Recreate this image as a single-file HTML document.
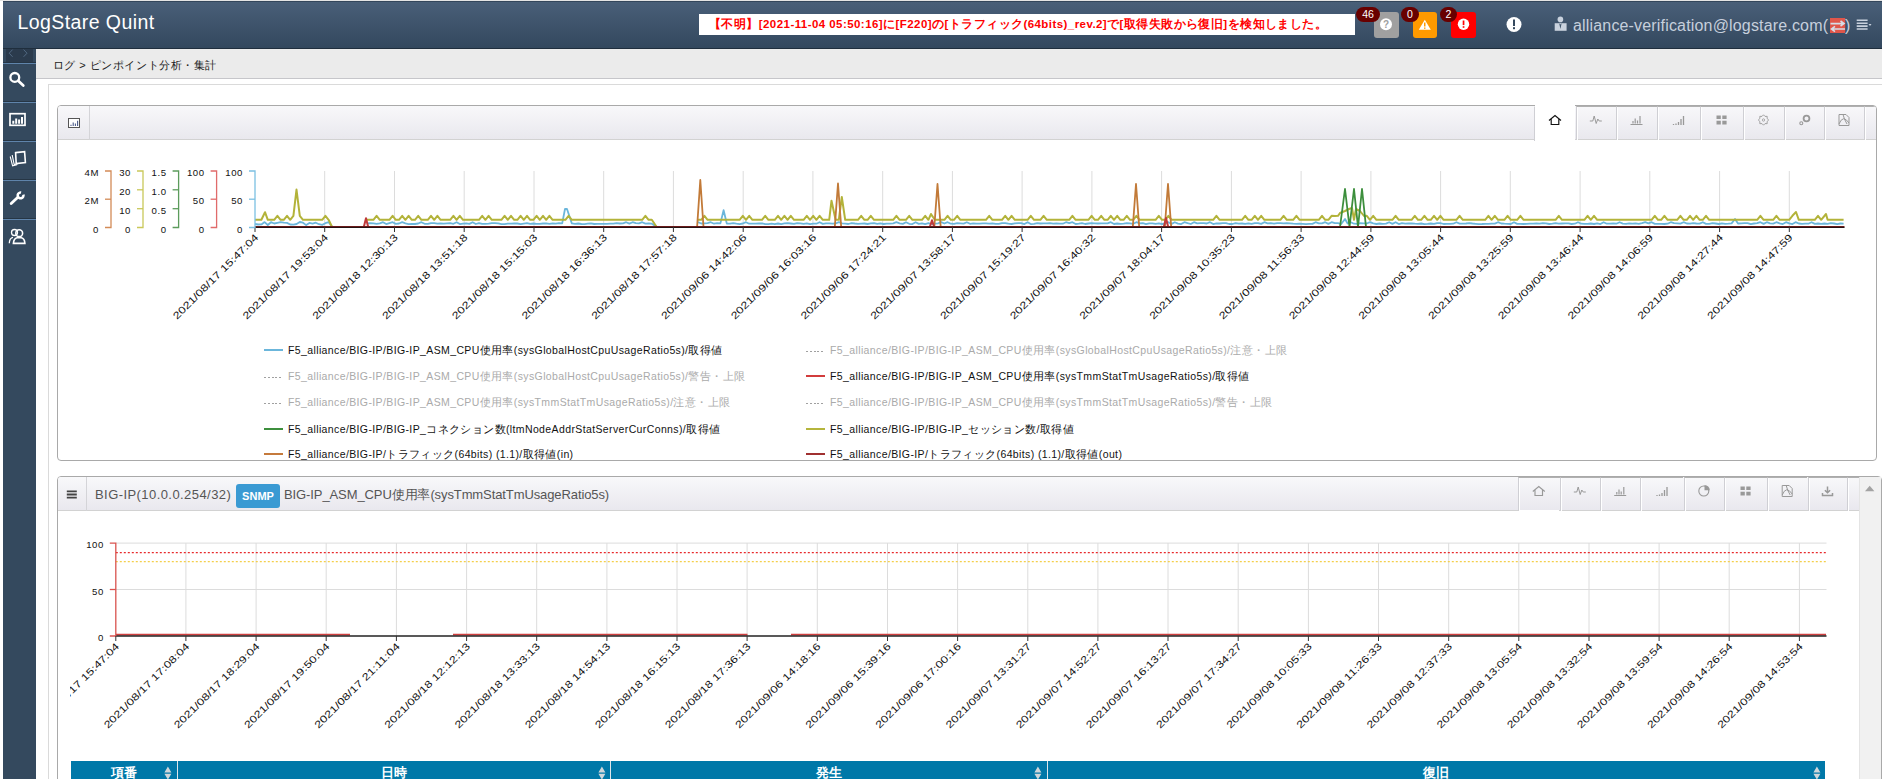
<!DOCTYPE html>
<html><head><meta charset="utf-8">
<style>
*{box-sizing:border-box;margin:0;padding:0}
html,body{width:1882px;height:779px;overflow:hidden;background:#fff;font-family:"Liberation Sans",sans-serif;position:relative}
.abs{position:absolute}
#topline{position:absolute;left:0;top:0;width:1882px;height:1px;background:#e4e4e4}
#hdr{position:absolute;left:3px;top:1px;width:1879px;height:48px;background:linear-gradient(#495f78,#33485e);border-top:1px solid #33465b;border-bottom:1px solid #1f2e3d}
#logo{position:absolute;left:14.5px;top:9px;font-size:19.5px;color:#fff;letter-spacing:0.42px}
#alert{position:absolute;left:699px;top:14px;width:656px;height:21px;background:#fff;color:#f00;font-size:11.5px;font-weight:bold;line-height:21px;padding-left:10px;white-space:nowrap;overflow:hidden;letter-spacing:0.44px}
.sq{position:absolute;top:12px;width:25px;height:26px;border-radius:3px}
.bdg{position:absolute;top:7px;height:15px;border-radius:8px;background:#680000;color:#fff;font-size:10.5px;line-height:15px;text-align:center}
#user{position:absolute;left:1573px;top:17px;font-size:16px;color:#c6cfdc;white-space:nowrap;letter-spacing:0.17px;line-height:18px}
#user2{position:absolute;left:1845px;top:17px;font-size:16px;color:#c6cfdc;line-height:18px}
#side{position:absolute;left:3px;top:49px;width:33px;height:730px;background:#34495e}
.sep{position:absolute;left:0;width:33px;height:2px;border-top:1px solid #263645;background:#5f84ab;}
#bc{position:absolute;left:36px;top:49px;width:1846px;height:30px;background:#ebebeb;border-bottom:1px solid #c6c6ca}
#bctext{position:absolute;left:16.5px;top:8.5px;font-size:11px;color:#222;letter-spacing:0.55px}
#outer{position:absolute;left:48px;top:84px;width:1900px;height:800px;border:1px solid #dadada}
.panel{position:absolute;border:1px solid #a9a9a9;border-radius:4px 4px 0 0;background:#fff;overflow:hidden}
.ph{position:absolute;left:0;top:0;height:34px;background:linear-gradient(#f8f8fa,#e9e8ee);border-bottom:1px solid #d2d2d2}
.tab{position:absolute;top:0;height:34px;border-left:1px solid #cfcfd4;box-shadow:inset 1px 0 0 #fff;border-top:1px solid #b0b0b0}
.tab svg{position:absolute;left:0;top:0}
.lg-l{position:absolute;width:19px;height:2px}
.lg-t{position:absolute;font-size:10.5px;white-space:nowrap;line-height:14px;letter-spacing:0.38px}
svg text{font-family:"Liberation Sans",sans-serif}
#thead{position:absolute;left:71px;top:761px;width:1754px;height:30px;background:#0078a8;color:#fff;font-size:13px}
.th{position:absolute;top:0;height:30px;text-align:center;line-height:24px;font-weight:bold}
#scroll{position:absolute;left:1859px;top:477px;width:22px;height:310px;background:#f1f1f1;border-left:1px solid #e4e4e4}
#p2title{position:absolute;left:95px;top:486px;font-size:13px;color:#555;white-space:nowrap;line-height:18px;letter-spacing:0.43px}
#snmp{position:absolute;left:236px;top:484px;width:44px;height:24px;border-radius:3px;background:#3a9ad3;color:#fff;font-weight:bold;font-size:11px;line-height:24px;text-align:center}
#p2title2{position:absolute;left:284px;top:486px;font-size:13px;color:#555;white-space:nowrap;line-height:18px;letter-spacing:-0.1px}
.j{display:inline-block;white-space:nowrap;overflow:visible}
</style></head><body>
<div id="topline"></div>
<div id="hdr">
  <div id="logo">LogStare Quint</div>
</div>
<div id="alert"><span class="j" style="width:49.77px">【不明】</span>[2021-11-04 05:50:16]<span class="j" style="width:12.45px">に</span>[F220]<span class="j" style="width:12.45px">の</span>[<span class="j" style="width:74.64px">トラフィック</span>(64bits)_rev.2]<span class="j" style="width:12.45px">で</span>[<span class="j" style="width:99.53px">取得失敗から復旧</span>]<span class="j" style="width:99.53px">を検知しました。</span></div>
<div class="sq" style="left:1374px;background:#a0a0a0"></div>
<div class="sq" style="left:1413px;width:24px;background:#ff9a00"></div>
<div class="sq" style="left:1451px;background:#ff0000"></div>
<svg class="abs" style="left:0;top:0" width="1882" height="49">
  <circle cx="1386" cy="24.2" r="6" fill="#fff"/>
  <text x="1386" y="28.2" text-anchor="middle" font-size="10" font-weight="bold" fill="#a0a0a0">?</text>
  <path d="M1424.8,19.8 L1430.8,29.8 L1418.8,29.8 Z" fill="#fff"/>
  <rect x="1424" y="22.5" width="1.5" height="4" fill="#ff9a00"/><rect x="1424" y="27.5" width="1.5" height="1.3" fill="#ff9a00"/>
  <circle cx="1463.5" cy="24.2" r="5.7" fill="#fff"/>
  <rect x="1462.7" y="20.5" width="1.7" height="4.6" fill="#f00"/><rect x="1462.7" y="26.2" width="1.7" height="1.6" fill="#f00"/>
  <circle cx="1514" cy="24.5" r="7.5" fill="#fff"/>
  <rect x="1513" y="19.5" width="2" height="6.5" fill="#34485d"/><rect x="1513" y="27.2" width="2" height="2" fill="#34485d"/>
  <circle cx="1560.4" cy="19.4" r="2.8" fill="#c9d2de"/>
  <path d="M1554.7,23.2 H1566.6 V30.8 H1554.7 Z" fill="#c9d2de"/>
  <path d="M1559.2,23.2 L1560.4,29 L1561.6,23.2 L1560.4,24.6 Z" fill="#3d5369"/>
  <rect x="1830" y="18" width="15.2" height="15" fill="#e0564a"/>
  <path d="M1830.5,23.6 H1843 M1840.5,21 L1844,23.6 L1840.5,26.2" stroke="#d6dce6" stroke-width="1.6" fill="none"/>
  <path d="M1845,29 H1832.5 M1835,26.4 L1831.5,29 L1835,31.6" stroke="#d6dce6" stroke-width="1.6" fill="none"/>
  <path d="M1856.7,20.3 H1867.6 M1856.7,23.2 H1867.6 M1856.7,26.1 H1867.6 M1856.7,29 H1867.6" stroke="#c9d2de" stroke-width="1.6"/>
  <path d="M1868.5,24 L1871.5,24 L1870,26 Z" fill="#c9d2de"/>
</svg>
<div class="bdg" style="left:1356px;width:24px">46</div>
<div class="bdg" style="left:1401px;width:18px">0</div>
<div class="bdg" style="left:1440px;width:17px">2</div>
<div id="user">alliance-verification@logstare.com(</div><div id="user2">)</div>
<div id="side">
  <div class="abs" style="left:3px;top:0;width:27px;height:13px;background:#2b3b4d"></div>
  <svg class="abs" style="left:0;top:0" width="33" height="220">
    <path d="M9.6,0.6 L6.2,4.2 L9.6,7.8 M20.6,0.6 L24,4.2 L20.6,7.8" stroke="#566e89" stroke-width="0.9" fill="none"/>
    <circle cx="11.8" cy="28.4" r="4.4" stroke="#fff" stroke-width="2.3" fill="none"/>
    <path d="M15.2,31.8 L20.3,36.6" stroke="#fff" stroke-width="2.7" stroke-linecap="round"/>
    <rect x="7" y="64.7" width="15" height="11.6" stroke="#fff" stroke-width="1.7" fill="none"/>
    <path d="M10.3,74.7 V71.8 M13.2,74.7 V69.5 M16.1,74.7 V70.6 M19,74.7 V68" stroke="#fff" stroke-width="2"/>
    <path d="M7.2,107.5 L9.6,116.8 L14,115.8" stroke="#fff" stroke-width="1.1" fill="none"/>
    <path d="M9.2,106 L11.2,115.5 L15,114.8" stroke="#fff" stroke-width="1.1" fill="none"/>
    <path d="M12.6,103.6 L21.6,102.6 L22.4,113.6 L13.2,114.6 Z" stroke="#fff" stroke-width="1.6" fill="none"/>
    <path d="M8.2,154.6 L14.6,148.4" stroke="#fff" stroke-width="2.8" stroke-linecap="round"/>
    <circle cx="17.6" cy="146.4" r="2.9" stroke="#fff" stroke-width="2.5" fill="none" stroke-dasharray="14.6,3.6" transform="rotate(-15 17.6 146.4)"/>
    <circle cx="11.5" cy="183.5" r="3" stroke="#fff" stroke-width="1.3" fill="none"/>
    <path d="M6.3,194.3 Q6.5,188.8 10,188.3" stroke="#fff" stroke-width="1.3" fill="none"/>
    <circle cx="16.2" cy="184.2" r="3.4" stroke="#fff" stroke-width="1.6" fill="none"/>
    <path d="M10.4,194.4 Q10.8,189.4 14,188.8 H18.4 Q21.6,189.4 21.9,194.4 Z" stroke="#fff" stroke-width="1.6" fill="none"/>
  </svg>
  <div class="sep" style="top:13px"></div>
  <div class="sep" style="top:52px"></div>
  <div class="sep" style="top:91px"></div>
  <div class="sep" style="top:130px"></div>
  <div class="sep" style="top:169px"></div>
</div>
<div id="bc"><div id="bctext"><span class="j" style="width:23.11px">ログ</span> &gt; <span class="j" style="width:127.06px">ピンポイント分析・集計</span></div></div>
<div id="outer"></div>
<div class="panel" style="left:57px;top:105px;width:1820px;height:356px;border-radius:4px">
  <div class="ph" style="width:1820px">
    <div class="abs" style="left:31px;top:0;width:1px;height:34px;background:#d4d4d8"></div>
    <svg class="abs" style="left:0;top:0" width="31" height="34">
      <rect x="10.5" y="12.5" width="11" height="9" stroke="#555" stroke-width="1" fill="#fff"/>
      <path d="M13,20 V18.8 M15.2,20 V16.5 M17.4,20 V17.5 M19.6,20 V14.8" stroke="#4a5a8a" stroke-width="1.1"/>
    </svg>
    <div class="tab" style="left:1476px;width:41px;background:#fff;border-top-color:#fff;height:35px"></div>
<div class="tab" style="left:1518px;width:40px;"></div>
<div class="tab" style="left:1558px;width:41px;"></div>
<div class="tab" style="left:1599px;width:43px;"></div>
<div class="tab" style="left:1642px;width:43px;"></div>
<div class="tab" style="left:1685px;width:41px;"></div>
<div class="tab" style="left:1726px;width:40px;"></div>
<div class="tab" style="left:1766px;width:40px;"></div><div class="tab" style="left:1806px;width:20px;border-left:1px solid #cfcfd4"></div>
  </div>
</div>
<div class="panel" style="left:57px;top:476px;width:1825px;height:320px">
  <div class="ph" style="width:1802px">
    <div class="abs" style="left:28px;top:0;width:1px;height:34px;background:#d4d4d8"></div>
    <svg class="abs" style="left:0;top:0" width="29" height="34">
      <path d="M8.8,14.3 H18.8 M8.8,17.5 H18.8 M8.8,20.7 H18.8" stroke="#444" stroke-width="1.8"/>
    </svg>
    <div class="tab" style="left:1460px;width:42px;"></div>
<div class="tab" style="left:1502px;width:40px;"></div>
<div class="tab" style="left:1542px;width:40px;"></div>
<div class="tab" style="left:1582px;width:43px;"></div>
<div class="tab" style="left:1626px;width:40px;"></div>
<div class="tab" style="left:1666px;width:43px;"></div>
<div class="tab" style="left:1709px;width:40px;"></div>
<div class="tab" style="left:1750px;width:40px;"></div><div class="tab" style="left:1789px;width:20px"></div>
  </div>
</div>
<div class="abs" style="left:1535px;top:105px;width:40px;height:1px;background:#fff"></div>
<div class="abs" style="left:1519px;top:510px;width:40px;height:1px;background:#fff"></div>
<div id="scroll"><svg class="abs" style="left:0;top:0" width="22" height="30"><path d="M5,14.2 L9.7,8.7 L14.4,14.2 Z" fill="#a3a3a3"/></svg></div>
<div id="p2title">BIG-IP(10.0.0.254/32)</div>
<div id="snmp">SNMP</div>
<div id="p2title2">BIG-IP_ASM_CPU<span class="j" style="width:38.70px">使用率</span>(sysTmmStatTmUsageRatio5s)</div>
<svg class="abs" style="left:0;top:0" width="1882" height="779">
<line x1="324.7" y1="171.0" x2="324.7" y2="227.5" stroke="#dcdcdc" stroke-width="1"/>
<line x1="394.5" y1="171.0" x2="394.5" y2="227.5" stroke="#dcdcdc" stroke-width="1"/>
<line x1="464.2" y1="171.0" x2="464.2" y2="227.5" stroke="#dcdcdc" stroke-width="1"/>
<line x1="534.0" y1="171.0" x2="534.0" y2="227.5" stroke="#dcdcdc" stroke-width="1"/>
<line x1="603.7" y1="171.0" x2="603.7" y2="227.5" stroke="#dcdcdc" stroke-width="1"/>
<line x1="673.4" y1="171.0" x2="673.4" y2="227.5" stroke="#dcdcdc" stroke-width="1"/>
<line x1="743.2" y1="171.0" x2="743.2" y2="227.5" stroke="#dcdcdc" stroke-width="1"/>
<line x1="812.9" y1="171.0" x2="812.9" y2="227.5" stroke="#dcdcdc" stroke-width="1"/>
<line x1="882.7" y1="171.0" x2="882.7" y2="227.5" stroke="#dcdcdc" stroke-width="1"/>
<line x1="952.4" y1="171.0" x2="952.4" y2="227.5" stroke="#dcdcdc" stroke-width="1"/>
<line x1="1022.1" y1="171.0" x2="1022.1" y2="227.5" stroke="#dcdcdc" stroke-width="1"/>
<line x1="1091.9" y1="171.0" x2="1091.9" y2="227.5" stroke="#dcdcdc" stroke-width="1"/>
<line x1="1161.6" y1="171.0" x2="1161.6" y2="227.5" stroke="#dcdcdc" stroke-width="1"/>
<line x1="1231.4" y1="171.0" x2="1231.4" y2="227.5" stroke="#dcdcdc" stroke-width="1"/>
<line x1="1301.1" y1="171.0" x2="1301.1" y2="227.5" stroke="#dcdcdc" stroke-width="1"/>
<line x1="1370.9" y1="171.0" x2="1370.9" y2="227.5" stroke="#dcdcdc" stroke-width="1"/>
<line x1="1440.6" y1="171.0" x2="1440.6" y2="227.5" stroke="#dcdcdc" stroke-width="1"/>
<line x1="1510.3" y1="171.0" x2="1510.3" y2="227.5" stroke="#dcdcdc" stroke-width="1"/>
<line x1="1580.1" y1="171.0" x2="1580.1" y2="227.5" stroke="#dcdcdc" stroke-width="1"/>
<line x1="1649.8" y1="171.0" x2="1649.8" y2="227.5" stroke="#dcdcdc" stroke-width="1"/>
<line x1="1719.6" y1="171.0" x2="1719.6" y2="227.5" stroke="#dcdcdc" stroke-width="1"/>
<line x1="1789.3" y1="171.0" x2="1789.3" y2="227.5" stroke="#dcdcdc" stroke-width="1"/>
<path d="M255.0,224.0 L258.2,224.5 L261.4,224.4 L264.6,222.1 L267.8,225.0 L271.0,222.2 L274.2,223.5 L277.4,222.8 L280.6,222.2 L283.8,222.7 L287.0,222.9 L290.2,224.5 L293.4,224.6 L296.6,224.0 L299.8,222.0 L303.0,222.7 L306.2,225.1 L309.4,222.9 L312.6,223.7 L315.8,222.7 L319.0,224.2 L322.2,224.9 L325.4,223.2 L328.6,222.2 L332.0,226.8 M367.0,223.4 L370.2,223.1 L373.4,223.4 L376.6,223.9 L379.8,223.4 L383.0,222.2 L386.2,224.1 L389.4,223.1 L392.6,222.2 L395.8,223.9 L399.0,223.5 L402.2,222.2 L405.4,223.3 L408.6,224.1 L411.8,223.9 L415.0,224.0 L418.2,223.5 L421.4,222.2 L424.6,223.8 L427.8,223.9 L431.0,223.1 L434.2,223.2 L437.4,223.7 L440.6,223.4 L443.8,223.6 L447.0,223.4 L450.2,223.2 L453.4,223.8 L456.6,222.2 L459.8,224.1 L463.0,223.6 L466.2,223.3 L469.4,223.9 L472.6,222.2 L475.8,224.0 L479.0,223.1 L482.2,223.9 L485.4,223.8 L488.6,223.7 L491.8,223.2 L495.0,223.2 L498.2,223.4 L501.4,224.1 L504.6,224.1 L507.8,223.6 L511.0,223.6 L514.2,223.5 L517.4,223.5 L520.6,224.1 L523.8,223.6 L527.0,223.2 L530.2,223.9 L533.4,223.5 L536.6,223.9 L539.8,223.8 L543.0,223.5 L546.2,223.4 L549.4,223.9 L552.6,223.4 L555.8,223.7 L559.0,223.1 L562.2,223.4 L565.0,209.0 L567.0,209.0 L571.8,223.4 L575.0,223.8 L578.2,223.5 L581.4,224.0 L584.6,224.1 L587.8,223.6 L591.0,223.3 L594.2,224.0 L597.4,223.8 L600.6,223.8 L603.8,223.9 L607.0,223.8 L610.2,223.7 L613.4,223.7 L616.6,223.1 L619.8,223.5 L623.0,223.3 L626.2,222.2 L629.4,223.6 L632.6,222.2 L635.8,223.2 L639.0,223.4 L642.2,222.2 L645.4,223.6 L648.6,223.5 L651.8,223.7 L656.5,226.8 M698.0,222.2 L701.2,223.5 L704.4,223.4 L707.6,223.2 L710.8,222.2 L714.0,223.7 L717.2,223.2 L720.4,223.4 L723.6,210.2 L726.8,223.5 L730.0,223.7 L733.2,223.2 L736.4,223.7 L739.6,224.1 L742.8,223.5 L746.0,222.2 L749.2,223.7 L752.4,223.7 L755.6,223.7 L758.8,223.5 L762.0,223.3 L765.2,224.1 L768.4,224.1 L771.6,223.7 L774.8,224.1 L778.0,223.5 L781.2,224.1 L784.4,223.4 L787.6,223.2 L790.8,223.5 L794.0,223.9 L797.2,223.1 L800.4,223.4 L803.6,223.9 L806.8,223.4 L810.0,224.1 L813.2,223.7 L816.4,223.7 L819.6,222.2 L822.8,223.9 L826.0,223.4 L829.2,223.4 L832.4,223.6 L835.6,223.5 L838.8,222.2 L842.0,223.4 L845.2,223.6 L848.4,224.0 L851.6,223.1 L854.8,223.5 L858.0,223.8 L861.2,223.6 L864.4,223.5 L867.6,224.0 L870.8,223.4 L874.0,223.2 L877.2,223.8 L880.4,223.4 L883.6,224.0 L886.8,223.6 L890.0,223.6 L893.2,223.3 L896.4,222.2 L899.6,223.3 L902.8,223.9 L906.0,222.2 L909.2,223.8 L912.4,224.1 L915.6,222.2 L918.8,223.9 L922.0,223.3 L925.2,224.1 L928.4,223.2 L931.6,224.0 L934.8,223.7 L938.0,223.3 L941.2,222.2 L944.4,223.5 L947.6,222.2 L950.8,223.7 L954.0,223.8 L957.2,223.2 L960.4,223.4 L963.6,223.6 L966.8,222.2 L970.0,223.8 L973.2,223.3 L976.4,223.6 L979.6,223.7 L982.8,223.4 L986.0,223.4 L989.2,223.6 L992.4,223.3 L995.6,223.8 L998.8,223.8 L1002.0,223.2 L1005.2,223.2 L1008.4,223.7 L1011.6,224.0 L1014.8,223.4 L1018.0,223.1 L1021.2,223.2 L1024.4,224.1 L1027.6,222.2 L1030.8,224.1 L1034.0,223.8 L1037.2,223.2 L1040.4,223.5 L1043.6,223.4 L1046.8,223.4 L1050.0,223.2 L1053.2,223.7 L1056.4,223.5 L1059.6,223.6 L1062.8,223.7 L1066.0,222.2 L1069.2,223.1 L1072.4,222.2 L1075.6,224.0 L1078.8,223.6 L1082.0,223.1 L1085.2,224.0 L1088.4,223.5 L1091.6,223.2 L1094.8,223.3 L1098.0,223.5 L1101.2,223.3 L1104.4,223.4 L1107.6,223.4 L1110.8,222.2 L1114.0,224.0 L1117.2,223.5 L1120.4,223.8 L1123.6,223.6 L1126.8,223.2 L1130.0,223.4 L1133.2,223.8 L1136.4,222.2 L1139.6,223.3 L1142.8,223.2 L1146.0,224.1 L1149.2,223.4 L1152.4,223.4 L1155.6,223.8 L1158.8,223.3 L1162.0,224.0 L1165.2,223.5 L1168.4,222.2 L1171.6,223.9 L1174.8,222.2 L1178.0,223.6 L1181.2,224.1 L1184.4,222.2 L1187.6,223.2 L1190.8,224.0 L1194.0,222.2 L1197.2,223.3 L1200.4,223.2 L1203.6,223.2 L1206.8,223.5 L1210.0,222.2 L1213.2,224.1 L1216.4,223.3 L1219.6,223.5 L1222.8,223.2 L1226.0,223.2 L1229.2,224.0 L1232.4,224.0 L1235.6,223.1 L1238.8,223.6 L1242.0,223.5 L1245.2,223.8 L1248.4,223.4 L1251.6,223.9 L1254.8,223.2 L1258.0,223.2 L1261.2,223.9 L1264.4,222.2 L1267.6,223.3 L1270.8,223.2 L1274.0,223.7 L1277.2,223.2 L1280.4,223.1 L1283.6,223.4 L1286.8,223.2 L1290.0,223.4 L1293.2,223.7 L1296.4,223.8 L1299.6,223.7 L1302.8,223.9 L1306.0,224.1 L1309.2,223.8 L1312.4,223.9 L1315.6,222.2 L1318.8,223.3 L1322.0,223.4 L1325.2,222.2 L1328.4,223.9 L1331.6,222.2 L1334.8,223.2 L1338.0,223.2 L1341.2,224.0 L1345.0,219.0 L1347.6,223.5 L1350.8,222.2 L1354.0,223.7 L1357.2,223.9 L1360.4,223.2 L1363.6,223.3 L1366.8,223.5 L1370.0,222.2 L1373.2,223.4 L1376.4,224.0 L1379.6,223.5 L1382.8,223.9 L1386.0,223.6 L1389.2,222.2 L1392.4,223.9 L1395.6,222.2 L1398.8,224.1 L1402.0,223.1 L1405.2,223.6 L1408.4,223.5 L1411.6,223.4 L1414.8,223.7 L1418.0,223.9 L1421.2,223.5 L1424.4,224.1 L1427.6,223.9 L1430.8,223.5 L1434.0,223.9 L1437.2,223.1 L1440.4,223.2 L1443.6,224.0 L1446.8,223.9 L1450.0,223.8 L1453.2,223.7 L1456.4,222.2 L1459.6,223.6 L1462.8,223.7 L1466.0,223.5 L1469.2,223.1 L1472.4,223.5 L1475.6,223.8 L1478.8,224.1 L1482.0,224.0 L1485.2,223.8 L1488.4,223.9 L1491.6,223.7 L1494.8,223.6 L1498.0,222.2 L1501.2,223.5 L1504.4,223.7 L1507.6,223.8 L1510.8,224.0 L1514.0,222.2 L1517.2,223.9 L1520.4,223.8 L1523.6,224.0 L1526.8,223.9 L1530.0,223.7 L1533.2,223.6 L1536.4,223.3 L1539.6,223.6 L1542.8,223.1 L1546.0,223.3 L1549.2,224.0 L1552.4,223.7 L1555.6,223.2 L1558.8,223.7 L1562.0,223.5 L1565.2,223.3 L1568.4,223.4 L1571.6,224.0 L1574.8,223.7 L1578.0,222.2 L1581.2,223.7 L1584.4,223.9 L1587.6,223.8 L1590.8,223.5 L1594.0,224.0 L1597.2,223.4 L1600.4,224.1 L1603.6,222.2 L1606.8,223.7 L1610.0,223.7 L1613.2,223.3 L1616.4,223.7 L1619.6,222.2 L1622.8,223.6 L1626.0,223.9 L1629.2,223.4 L1632.4,223.7 L1635.6,223.3 L1638.8,223.9 L1642.0,223.2 L1645.2,222.2 L1648.4,223.3 L1651.6,222.2 L1654.8,223.9 L1658.0,223.8 L1661.2,223.9 L1664.4,224.0 L1667.6,223.7 L1670.8,222.2 L1674.0,223.2 L1677.2,223.3 L1680.4,223.6 L1683.6,222.2 L1686.8,223.5 L1690.0,223.6 L1693.2,223.2 L1696.4,223.5 L1699.6,223.6 L1702.8,222.2 L1706.0,223.9 L1709.2,223.8 L1712.4,223.2 L1715.6,223.5 L1718.8,224.0 L1722.0,223.4 L1725.2,223.8 L1728.4,223.7 L1731.6,223.4 L1735.0,219.0 L1738.0,223.5 L1741.2,223.3 L1744.4,223.2 L1747.6,223.2 L1750.8,224.1 L1754.0,223.5 L1757.2,223.2 L1760.4,222.2 L1763.6,223.9 L1766.8,222.2 L1770.0,223.4 L1773.2,223.6 L1776.4,222.2 L1779.6,223.3 L1782.8,224.1 L1786.0,222.2 L1789.2,223.4 L1792.4,224.1 L1795.6,222.2 L1798.8,223.5 L1802.0,223.9 L1805.2,223.7 L1808.4,223.7 L1811.6,222.2 L1814.8,223.9 L1818.0,223.5 L1821.2,223.9 L1824.4,223.5 L1827.6,223.9 L1830.8,223.2 L1834.0,223.5 L1837.2,224.1 L1840.4,223.5 L1843.6,223.6 " fill="none" stroke="#6bb6db" stroke-width="1.8" stroke-linejoin="round"/>
<path d="M255.0,219.8 L258.2,219.8 L261.4,219.8 L265.0,212.2 L267.8,219.8 L271.0,219.8 L274.2,219.8 L277.4,215.8 L280.6,219.8 L283.8,219.8 L287.0,215.8 L290.2,219.8 L293.4,215.8 L296.5,189.6 L299.8,215.8 L303.0,219.8 L306.2,219.8 L309.4,219.8 L312.6,219.8 L315.8,219.8 L319.0,219.8 L322.2,219.8 L325.4,215.8 L328.6,219.8 L332.0,226.8 M367.0,219.8 L370.2,219.8 L373.4,219.8 L376.6,215.8 L379.8,219.8 L383.0,219.8 L386.2,219.8 L389.4,219.8 L392.6,215.8 L395.8,219.8 L399.0,219.8 L402.2,215.8 L405.4,219.8 L408.6,215.8 L411.8,219.8 L415.0,219.8 L418.2,215.8 L421.4,219.8 L424.6,219.8 L427.8,219.8 L431.0,215.8 L434.2,219.8 L437.4,215.8 L440.6,219.8 L443.8,219.8 L447.0,219.8 L450.2,219.8 L453.4,215.8 L456.6,219.8 L459.8,215.8 L463.0,219.8 L466.2,219.8 L469.4,219.8 L472.6,219.8 L475.8,219.8 L479.0,219.8 L482.2,215.8 L485.4,219.8 L488.6,215.8 L491.8,219.8 L495.0,219.8 L498.2,219.8 L501.4,219.8 L504.6,215.8 L507.8,219.8 L511.0,215.8 L514.2,219.8 L517.4,219.8 L520.6,215.8 L523.8,219.8 L527.0,215.8 L530.2,219.8 L533.4,219.8 L536.6,215.8 L539.8,219.8 L543.0,215.8 L546.2,219.8 L549.4,215.8 L552.6,219.8 L555.8,219.8 L559.0,219.8 L562.2,219.8 L565.4,219.8 L568.6,215.8 L571.8,219.8 L575.0,219.8 L578.2,219.8 L581.4,219.8 L584.6,219.8 L587.8,219.8 L591.0,219.8 L594.2,219.8 L597.4,219.8 L600.6,219.8 L603.8,219.8 L607.0,219.8 L610.2,219.8 L613.4,219.8 L616.6,219.8 L619.8,219.8 L623.0,219.8 L626.2,219.8 L629.4,219.8 L632.6,219.8 L635.8,219.8 L639.0,219.8 L642.2,219.8 L645.4,215.8 L648.6,219.8 L651.8,219.8 L656.5,226.8 M698.0,219.8 L701.2,219.8 L704.4,215.8 L707.6,219.8 L710.8,219.8 L714.0,219.8 L717.2,219.8 L720.4,219.8 L723.6,219.8 L726.8,219.8 L730.0,219.8 L733.2,219.8 L736.4,219.8 L739.6,219.8 L742.8,215.8 L746.0,219.8 L749.2,215.8 L752.4,219.8 L755.6,219.8 L758.8,219.8 L762.0,219.8 L765.2,215.8 L768.4,219.8 L771.6,219.8 L774.8,219.8 L778.0,215.8 L781.2,219.8 L784.4,215.8 L787.6,219.8 L790.8,215.8 L794.0,219.8 L797.2,219.8 L800.4,219.8 L803.6,219.8 L806.8,215.8 L810.0,219.8 L813.2,215.8 L816.4,219.8 L819.6,215.8 L822.8,219.8 L826.0,219.8 L829.2,219.8 L831.5,200.7 L835.6,219.8 L838.8,219.8 L841.8,197.0 L845.2,219.8 L848.4,219.8 L851.6,219.8 L854.8,219.8 L858.0,219.8 L861.2,215.8 L864.4,219.8 L867.6,219.8 L870.8,215.8 L874.0,219.8 L877.2,219.8 L880.4,219.8 L883.6,219.8 L886.8,219.8 L890.0,219.8 L893.2,219.8 L896.4,215.8 L899.6,219.8 L902.8,219.8 L906.0,219.8 L909.2,215.8 L912.4,219.8 L915.6,219.8 L918.8,219.8 L922.0,219.8 L925.2,215.8 L928.4,219.8 L931.0,214.0 L934.8,219.8 L938.0,219.8 L941.2,219.8 L944.4,219.8 L947.6,215.8 L950.8,219.8 L954.0,219.8 L957.2,215.8 L960.4,219.8 L963.6,219.8 L966.8,219.8 L970.0,219.8 L973.2,219.8 L976.4,219.8 L979.6,219.8 L982.8,219.8 L986.0,219.8 L989.2,215.8 L992.4,219.8 L995.6,219.8 L998.8,219.8 L1002.0,219.8 L1005.2,215.8 L1008.4,219.8 L1011.6,215.8 L1014.8,219.8 L1018.0,219.8 L1021.2,219.8 L1024.4,219.8 L1027.6,219.8 L1030.8,215.8 L1034.0,219.8 L1037.2,219.8 L1040.4,219.8 L1043.6,215.8 L1046.8,219.8 L1050.0,219.8 L1053.2,219.8 L1056.4,219.8 L1059.6,219.8 L1062.8,219.8 L1066.0,219.8 L1069.2,219.8 L1072.4,215.8 L1075.6,219.8 L1078.8,219.8 L1082.0,219.8 L1085.2,219.8 L1088.4,219.8 L1091.6,215.8 L1094.8,219.8 L1098.0,219.8 L1101.2,215.8 L1104.4,219.8 L1107.6,219.8 L1110.8,215.8 L1114.0,219.8 L1117.2,215.8 L1120.4,219.8 L1123.6,219.8 L1126.8,215.8 L1130.0,219.8 L1133.2,219.8 L1136.4,215.8 L1139.6,219.8 L1142.8,219.8 L1146.0,219.8 L1149.2,219.8 L1152.4,219.8 L1155.6,219.8 L1158.8,215.8 L1162.0,219.8 L1165.2,219.8 L1168.4,215.8 L1171.6,219.8 L1174.8,219.8 L1178.0,219.8 L1181.2,219.8 L1184.4,219.8 L1187.6,219.8 L1190.8,219.8 L1194.0,219.8 L1197.2,219.8 L1200.4,219.8 L1203.6,219.8 L1206.8,219.8 L1210.0,219.8 L1213.2,219.8 L1216.4,215.8 L1219.6,219.8 L1222.8,219.8 L1226.0,219.8 L1229.2,219.8 L1232.4,219.8 L1235.6,219.8 L1238.8,219.8 L1242.0,219.8 L1245.2,215.8 L1248.4,219.8 L1251.6,219.8 L1254.8,215.8 L1258.0,219.8 L1261.2,215.8 L1264.4,219.8 L1267.6,219.8 L1270.8,219.8 L1274.0,219.8 L1277.2,219.8 L1280.4,219.8 L1283.6,215.8 L1286.8,219.8 L1290.0,219.8 L1293.2,219.8 L1296.4,215.8 L1299.6,219.8 L1302.8,219.8 L1306.0,219.8 L1309.2,219.8 L1312.4,219.8 L1315.6,219.8 L1318.8,219.8 L1322.0,215.8 L1325.2,219.8 L1328.4,219.8 L1331.6,215.8 L1335.0,216.0 L1338.0,215.8 L1340.0,213.0 L1345.0,211.0 L1349.0,209.0 L1352.0,208.0 L1354.0,219.8 L1356.0,209.0 L1360.0,211.0 L1364.0,216.0 L1366.8,215.8 L1370.0,219.8 L1373.2,215.8 L1376.4,219.8 L1379.6,219.8 L1382.8,219.8 L1386.0,219.8 L1389.2,219.8 L1392.4,219.8 L1395.6,215.8 L1398.8,219.8 L1402.0,219.8 L1405.2,219.8 L1408.4,219.8 L1411.6,219.8 L1414.8,215.8 L1418.0,219.8 L1421.2,219.8 L1424.4,215.8 L1427.6,219.8 L1430.8,219.8 L1434.0,215.8 L1437.2,219.8 L1440.4,215.8 L1443.6,219.8 L1446.8,219.8 L1450.0,219.8 L1453.2,219.8 L1456.4,219.8 L1459.6,215.8 L1462.8,219.8 L1466.0,219.8 L1469.2,219.8 L1472.4,219.8 L1475.6,219.8 L1478.8,219.8 L1482.0,219.8 L1485.2,219.8 L1488.4,215.8 L1491.6,219.8 L1494.8,215.8 L1498.0,219.8 L1501.2,219.8 L1504.4,219.8 L1507.6,215.8 L1510.8,219.8 L1514.0,219.8 L1517.2,219.8 L1520.4,215.8 L1523.6,219.8 L1526.8,219.8 L1530.0,219.8 L1533.2,219.8 L1536.4,219.8 L1539.6,219.8 L1542.8,219.8 L1546.0,219.8 L1549.2,219.8 L1552.4,219.8 L1555.6,219.8 L1558.8,215.8 L1562.0,219.8 L1565.2,219.8 L1568.4,219.8 L1571.6,219.8 L1574.8,219.8 L1578.0,219.8 L1581.2,219.8 L1584.4,219.8 L1587.6,215.8 L1590.8,219.8 L1594.0,215.8 L1597.2,219.8 L1600.4,219.8 L1603.6,219.8 L1606.8,219.8 L1610.0,219.8 L1613.2,219.8 L1616.4,219.8 L1619.6,219.8 L1622.8,219.8 L1626.0,219.8 L1629.2,219.8 L1632.4,219.8 L1635.6,219.8 L1638.8,219.8 L1642.0,219.8 L1645.2,219.8 L1648.4,219.8 L1651.6,219.8 L1654.8,215.8 L1658.0,219.8 L1661.2,219.8 L1664.4,215.8 L1667.6,219.8 L1670.8,219.8 L1674.0,219.8 L1677.2,219.8 L1680.4,215.8 L1683.6,219.8 L1686.8,219.8 L1690.0,215.8 L1693.2,219.8 L1696.4,215.8 L1699.6,219.8 L1702.8,219.8 L1706.0,215.8 L1709.2,219.8 L1712.4,219.8 L1715.6,219.8 L1718.8,219.8 L1722.0,219.8 L1725.2,219.8 L1728.4,219.8 L1731.6,219.8 L1734.8,219.8 L1738.0,219.8 L1741.2,219.8 L1744.4,219.8 L1747.6,219.8 L1750.8,219.8 L1754.0,219.8 L1757.2,219.8 L1760.4,215.8 L1763.6,219.8 L1766.8,219.8 L1770.0,219.8 L1773.2,219.8 L1776.4,215.8 L1779.6,219.8 L1782.8,219.8 L1786.0,219.8 L1789.2,219.8 L1792.4,215.8 L1796.0,212.0 L1798.8,219.8 L1802.0,219.8 L1805.2,219.8 L1808.4,219.8 L1811.6,219.8 L1814.8,219.8 L1818.0,215.8 L1821.2,219.8 L1826.0,214.0 L1827.6,219.8 L1830.8,219.8 L1834.0,219.8 L1837.2,219.8 L1840.4,219.8 L1843.6,219.8 " fill="none" stroke="#b3b33a" stroke-width="2" stroke-linejoin="round"/>
<path d="M1330,227 L1340,227 L1345,189 L1349.5,227 L1354,189 L1358,227 L1362,189 L1366,227 L1844,227" fill="none" stroke="#3d8f3d" stroke-width="1.8" stroke-linejoin="round"/>
<path d="M697.1,227 L700.3,180.0 L703.5,227" fill="none" stroke="#c27a38" stroke-width="1.8" stroke-linejoin="round"/>
<path d="M834.8,227 L838.0,183.5 L841.2,227" fill="none" stroke="#c27a38" stroke-width="1.8" stroke-linejoin="round"/>
<path d="M934.3,227 L937.5,184.0 L940.7,227" fill="none" stroke="#c27a38" stroke-width="1.8" stroke-linejoin="round"/>
<path d="M1132.8,227 L1136.0,184.0 L1139.2,227" fill="none" stroke="#c27a38" stroke-width="1.8" stroke-linejoin="round"/>
<path d="M1164.8,227 L1168.0,184.0 L1171.2,227" fill="none" stroke="#c27a38" stroke-width="1.8" stroke-linejoin="round"/>
<path d="M363.8,227 L366.0,218.2 L368.2,227" fill="none" stroke="#c03a3a" stroke-width="2" stroke-linejoin="round"/>
<path d="M929.8,227 L932.0,220.2 L934.2,227" fill="none" stroke="#c03a3a" stroke-width="2" stroke-linejoin="round"/>
<path d="M1163.8,227 L1166.0,218.0 L1168.2,227" fill="none" stroke="#c03a3a" stroke-width="2" stroke-linejoin="round"/>
<line x1="255" y1="227.5" x2="1844.5" y2="227.5" stroke="#111" stroke-width="1"/>
<line x1="255" y1="226.6" x2="1844.5" y2="226.6" stroke="#6a1a1a" stroke-width="1.4"/>
<line x1="255.0" y1="227" x2="255.0" y2="232" stroke="#333" stroke-width="1"/>
<line x1="324.7" y1="227" x2="324.7" y2="232" stroke="#333" stroke-width="1"/>
<line x1="394.5" y1="227" x2="394.5" y2="232" stroke="#333" stroke-width="1"/>
<line x1="464.2" y1="227" x2="464.2" y2="232" stroke="#333" stroke-width="1"/>
<line x1="534.0" y1="227" x2="534.0" y2="232" stroke="#333" stroke-width="1"/>
<line x1="603.7" y1="227" x2="603.7" y2="232" stroke="#333" stroke-width="1"/>
<line x1="673.4" y1="227" x2="673.4" y2="232" stroke="#333" stroke-width="1"/>
<line x1="743.2" y1="227" x2="743.2" y2="232" stroke="#333" stroke-width="1"/>
<line x1="812.9" y1="227" x2="812.9" y2="232" stroke="#333" stroke-width="1"/>
<line x1="882.7" y1="227" x2="882.7" y2="232" stroke="#333" stroke-width="1"/>
<line x1="952.4" y1="227" x2="952.4" y2="232" stroke="#333" stroke-width="1"/>
<line x1="1022.1" y1="227" x2="1022.1" y2="232" stroke="#333" stroke-width="1"/>
<line x1="1091.9" y1="227" x2="1091.9" y2="232" stroke="#333" stroke-width="1"/>
<line x1="1161.6" y1="227" x2="1161.6" y2="232" stroke="#333" stroke-width="1"/>
<line x1="1231.4" y1="227" x2="1231.4" y2="232" stroke="#333" stroke-width="1"/>
<line x1="1301.1" y1="227" x2="1301.1" y2="232" stroke="#333" stroke-width="1"/>
<line x1="1370.9" y1="227" x2="1370.9" y2="232" stroke="#333" stroke-width="1"/>
<line x1="1440.6" y1="227" x2="1440.6" y2="232" stroke="#333" stroke-width="1"/>
<line x1="1510.3" y1="227" x2="1510.3" y2="232" stroke="#333" stroke-width="1"/>
<line x1="1580.1" y1="227" x2="1580.1" y2="232" stroke="#333" stroke-width="1"/>
<line x1="1649.8" y1="227" x2="1649.8" y2="232" stroke="#333" stroke-width="1"/>
<line x1="1719.6" y1="227" x2="1719.6" y2="232" stroke="#333" stroke-width="1"/>
<line x1="1789.3" y1="227" x2="1789.3" y2="232" stroke="#333" stroke-width="1"/>
<text transform="translate(259.0,238) rotate(-45)" text-anchor="end" font-size="9.9" textLength="116" lengthAdjust="spacingAndGlyphs" fill="#111">2021/08/17 15:47:04</text>
<text transform="translate(328.7,238) rotate(-45)" text-anchor="end" font-size="9.9" textLength="116" lengthAdjust="spacingAndGlyphs" fill="#111">2021/08/17 19:53:04</text>
<text transform="translate(398.5,238) rotate(-45)" text-anchor="end" font-size="9.9" textLength="116" lengthAdjust="spacingAndGlyphs" fill="#111">2021/08/18 12:30:13</text>
<text transform="translate(468.2,238) rotate(-45)" text-anchor="end" font-size="9.9" textLength="116" lengthAdjust="spacingAndGlyphs" fill="#111">2021/08/18 13:51:18</text>
<text transform="translate(538.0,238) rotate(-45)" text-anchor="end" font-size="9.9" textLength="116" lengthAdjust="spacingAndGlyphs" fill="#111">2021/08/18 15:15:03</text>
<text transform="translate(607.7,238) rotate(-45)" text-anchor="end" font-size="9.9" textLength="116" lengthAdjust="spacingAndGlyphs" fill="#111">2021/08/18 16:36:13</text>
<text transform="translate(677.4,238) rotate(-45)" text-anchor="end" font-size="9.9" textLength="116" lengthAdjust="spacingAndGlyphs" fill="#111">2021/08/18 17:57:18</text>
<text transform="translate(747.2,238) rotate(-45)" text-anchor="end" font-size="9.9" textLength="116" lengthAdjust="spacingAndGlyphs" fill="#111">2021/09/06 14:42:06</text>
<text transform="translate(816.9,238) rotate(-45)" text-anchor="end" font-size="9.9" textLength="116" lengthAdjust="spacingAndGlyphs" fill="#111">2021/09/06 16:03:16</text>
<text transform="translate(886.7,238) rotate(-45)" text-anchor="end" font-size="9.9" textLength="116" lengthAdjust="spacingAndGlyphs" fill="#111">2021/09/06 17:24:21</text>
<text transform="translate(956.4,238) rotate(-45)" text-anchor="end" font-size="9.9" textLength="116" lengthAdjust="spacingAndGlyphs" fill="#111">2021/09/07 13:58:17</text>
<text transform="translate(1026.2,238) rotate(-45)" text-anchor="end" font-size="9.9" textLength="116" lengthAdjust="spacingAndGlyphs" fill="#111">2021/09/07 15:19:27</text>
<text transform="translate(1095.9,238) rotate(-45)" text-anchor="end" font-size="9.9" textLength="116" lengthAdjust="spacingAndGlyphs" fill="#111">2021/09/07 16:40:32</text>
<text transform="translate(1165.6,238) rotate(-45)" text-anchor="end" font-size="9.9" textLength="116" lengthAdjust="spacingAndGlyphs" fill="#111">2021/09/07 18:04:17</text>
<text transform="translate(1235.4,238) rotate(-45)" text-anchor="end" font-size="9.9" textLength="116" lengthAdjust="spacingAndGlyphs" fill="#111">2021/09/08 10:35:23</text>
<text transform="translate(1305.1,238) rotate(-45)" text-anchor="end" font-size="9.9" textLength="116" lengthAdjust="spacingAndGlyphs" fill="#111">2021/09/08 11:56:33</text>
<text transform="translate(1374.9,238) rotate(-45)" text-anchor="end" font-size="9.9" textLength="116" lengthAdjust="spacingAndGlyphs" fill="#111">2021/09/08 12:44:59</text>
<text transform="translate(1444.6,238) rotate(-45)" text-anchor="end" font-size="9.9" textLength="116" lengthAdjust="spacingAndGlyphs" fill="#111">2021/09/08 13:05:44</text>
<text transform="translate(1514.3,238) rotate(-45)" text-anchor="end" font-size="9.9" textLength="116" lengthAdjust="spacingAndGlyphs" fill="#111">2021/09/08 13:25:59</text>
<text transform="translate(1584.1,238) rotate(-45)" text-anchor="end" font-size="9.9" textLength="116" lengthAdjust="spacingAndGlyphs" fill="#111">2021/09/08 13:46:44</text>
<text transform="translate(1653.8,238) rotate(-45)" text-anchor="end" font-size="9.9" textLength="116" lengthAdjust="spacingAndGlyphs" fill="#111">2021/09/08 14:06:59</text>
<text transform="translate(1723.6,238) rotate(-45)" text-anchor="end" font-size="9.9" textLength="116" lengthAdjust="spacingAndGlyphs" fill="#111">2021/09/08 14:27:44</text>
<text transform="translate(1793.3,238) rotate(-45)" text-anchor="end" font-size="9.9" textLength="116" lengthAdjust="spacingAndGlyphs" fill="#111">2021/09/08 14:47:59</text>
<path d="M105.0,171.0 H111.0 V227.5 H105.0" fill="none" stroke="#d38b57" stroke-width="1.3"/>
<text x="99.0" y="176.2" text-anchor="end" font-size="9.6" letter-spacing="0.55" fill="#111">4M</text>
<line x1="105.0" y1="199.2" x2="111.0" y2="199.2" stroke="#d38b57" stroke-width="1.3"/>
<text x="99.0" y="204.4" text-anchor="end" font-size="9.6" letter-spacing="0.55" fill="#111">2M</text>
<text x="99.0" y="232.7" text-anchor="end" font-size="9.6" letter-spacing="0.55" fill="#111">0</text>
<path d="M137.0,171.0 H143.0 V227.5 H137.0" fill="none" stroke="#c9c85a" stroke-width="1.3"/>
<text x="131.0" y="176.2" text-anchor="end" font-size="9.6" letter-spacing="0.55" fill="#111">30</text>
<line x1="137.0" y1="189.8" x2="143.0" y2="189.8" stroke="#c9c85a" stroke-width="1.3"/>
<text x="131.0" y="195.0" text-anchor="end" font-size="9.6" letter-spacing="0.55" fill="#111">20</text>
<line x1="137.0" y1="208.7" x2="143.0" y2="208.7" stroke="#c9c85a" stroke-width="1.3"/>
<text x="131.0" y="213.9" text-anchor="end" font-size="9.6" letter-spacing="0.55" fill="#111">10</text>
<text x="131.0" y="232.7" text-anchor="end" font-size="9.6" letter-spacing="0.55" fill="#111">0</text>
<path d="M172.6,171.0 H178.6 V227.5 H172.6" fill="none" stroke="#5c9c5c" stroke-width="1.3"/>
<text x="166.6" y="176.2" text-anchor="end" font-size="9.6" letter-spacing="0.55" fill="#111">1.5</text>
<line x1="172.6" y1="189.8" x2="178.6" y2="189.8" stroke="#5c9c5c" stroke-width="1.3"/>
<text x="166.6" y="195.0" text-anchor="end" font-size="9.6" letter-spacing="0.55" fill="#111">1.0</text>
<line x1="172.6" y1="208.7" x2="178.6" y2="208.7" stroke="#5c9c5c" stroke-width="1.3"/>
<text x="166.6" y="213.9" text-anchor="end" font-size="9.6" letter-spacing="0.55" fill="#111">0.5</text>
<text x="166.6" y="232.7" text-anchor="end" font-size="9.6" letter-spacing="0.55" fill="#111">0</text>
<path d="M210.6,171.0 H216.6 V227.5 H210.6" fill="none" stroke="#e06b6b" stroke-width="1.3"/>
<text x="204.6" y="176.2" text-anchor="end" font-size="9.6" letter-spacing="0.55" fill="#111">100</text>
<line x1="210.6" y1="199.2" x2="216.6" y2="199.2" stroke="#e06b6b" stroke-width="1.3"/>
<text x="204.6" y="204.4" text-anchor="end" font-size="9.6" letter-spacing="0.55" fill="#111">50</text>
<text x="204.6" y="232.7" text-anchor="end" font-size="9.6" letter-spacing="0.55" fill="#111">0</text>
<path d="M249.0,171.0 H255.0 V227.5 H249.0" fill="none" stroke="#7cc0e2" stroke-width="1.3"/>
<text x="243.0" y="176.2" text-anchor="end" font-size="9.6" letter-spacing="0.55" fill="#111">100</text>
<line x1="249.0" y1="199.2" x2="255.0" y2="199.2" stroke="#7cc0e2" stroke-width="1.3"/>
<text x="243.0" y="204.4" text-anchor="end" font-size="9.6" letter-spacing="0.55" fill="#111">50</text>
<text x="243.0" y="232.7" text-anchor="end" font-size="9.6" letter-spacing="0.55" fill="#111">0</text><path d="M1549.0,120.5 L1555.0,115.5 L1561.0,120.5 M1551.2,119.0 V124.5 H1558.8 V119.0" stroke="#111" stroke-width="1.15" fill="none"/>
<path d="M1589.8,121.0 H1592.8 L1594.2,116.0 L1596.2,123.5 L1597.8,119.0 L1599.2,121.0 H1601.8" stroke="#999" stroke-width="1" fill="none"/>
<path d="M1630.5,124.5 H1642.5 M1633.0,123.5 V121.0 M1635.2,123.5 V118.5 M1637.5,123.5 V120.5 M1640.0,123.5 V116.0" stroke="#999" stroke-width="1.2" fill="none"/>
<path d="M1673.5,125.0 V124.0 M1676.0,125.0 V123.5 M1678.5,125.0 V122.0 M1681.0,125.0 V119.0 M1683.5,125.0 V116.0" stroke="#999" stroke-width="1.3" fill="none"/>
<path d="M1716.5,115.5 h4.3 v3.6 h-4.3 Z M1722.3,115.5 h4.3 v3.6 h-4.3 Z M1716.5,120.8 h4.3 v3.6 h-4.3 Z M1722.3,120.8 h4.3 v3.6 h-4.3 Z" fill="#999"/>
<polygon points="1763.50,114.80 1764.99,116.40 1767.18,116.32 1767.10,118.51 1768.70,120.00 1767.10,121.49 1767.18,123.68 1764.99,123.60 1763.50,125.20 1762.01,123.60 1759.82,123.68 1759.90,121.49 1758.30,120.00 1759.90,118.51 1759.82,116.32 1762.01,116.40" stroke="#999" stroke-width="0.9" fill="none" stroke-linejoin="round"/><circle cx="1763.5" cy="120.0" r="1.2" stroke="#999" stroke-width="0.8" fill="none"/>
<circle cx="1806.5" cy="118.5" r="2.9" stroke="#999" stroke-width="1.8" fill="none"/><circle cx="1801.3" cy="123.3" r="1.5" stroke="#999" stroke-width="1.1" fill="none"/>
<path d="M1839.0,114.5 H1846.0 L1849.0,117.5 V125.5 H1839.0 Z M1839.0,124.0 Q1843.0,114.0 1849.0,123.0 M1843.0,114.5 Q1844.0,119.0 1847.0,124.0" stroke="#999" stroke-width="1" fill="none"/><path d="M1532.8,491.5 L1538.8,486.5 L1544.8,491.5 M1535.0,490.0 V495.5 H1542.5 V490.0" stroke="#999" stroke-width="1.15" fill="none"/>
<path d="M1573.8,492.0 H1576.8 L1578.2,487.0 L1580.2,494.5 L1581.8,490.0 L1583.2,492.0 H1585.8" stroke="#999" stroke-width="1" fill="none"/>
<path d="M1614.2,495.5 H1626.2 M1616.8,494.5 V492.0 M1619.0,494.5 V489.5 M1621.2,494.5 V491.5 M1623.8,494.5 V487.0" stroke="#999" stroke-width="1.2" fill="none"/>
<path d="M1657.0,496.0 V495.0 M1659.5,496.0 V494.5 M1662.0,496.0 V493.0 M1664.5,496.0 V490.0 M1667.0,496.0 V487.0" stroke="#999" stroke-width="1.3" fill="none"/>
<circle cx="1703.8" cy="491.0" r="5" stroke="#999" stroke-width="1.1" fill="none"/><path d="M1704.5,490.3 V485.0 A5.3,5.3 0 0 1 1709.8,490.3 Z" fill="#999"/>
<path d="M1740.5,486.5 h4.3 v3.6 h-4.3 Z M1746.3,486.5 h4.3 v3.6 h-4.3 Z M1740.5,491.8 h4.3 v3.6 h-4.3 Z M1746.3,491.8 h4.3 v3.6 h-4.3 Z" fill="#999"/>
<path d="M1782.2,485.5 H1789.2 L1792.2,488.5 V496.5 H1782.2 Z M1782.2,495.0 Q1786.2,485.0 1792.2,494.0 M1786.2,485.5 Q1787.2,490.0 1790.2,495.0" stroke="#999" stroke-width="1" fill="none"/>
<path d="M1827.5,486.5 V492.5 M1824.9,490.2 L1827.5,492.8 L1830.1,490.2 M1822.5,493.0 V495.5 H1832.5 V493.0" stroke="#999" stroke-width="1.5" fill="none"/>
</svg>
<svg class="abs" style="left:70px;top:510px" width="1789" height="269">
<g transform="translate(-70,-510)">
<line x1="115.8" y1="543.1" x2="1826.5" y2="543.1" stroke="#dcdcdc"/>
<line x1="115.8" y1="589.5" x2="1826.5" y2="589.5" stroke="#dcdcdc"/>
<line x1="185.9" y1="543.1" x2="185.9" y2="636.0" stroke="#dcdcdc"/>
<line x1="256.1" y1="543.1" x2="256.1" y2="636.0" stroke="#dcdcdc"/>
<line x1="326.2" y1="543.1" x2="326.2" y2="636.0" stroke="#dcdcdc"/>
<line x1="396.4" y1="543.1" x2="396.4" y2="636.0" stroke="#dcdcdc"/>
<line x1="466.6" y1="543.1" x2="466.6" y2="636.0" stroke="#dcdcdc"/>
<line x1="536.7" y1="543.1" x2="536.7" y2="636.0" stroke="#dcdcdc"/>
<line x1="606.9" y1="543.1" x2="606.9" y2="636.0" stroke="#dcdcdc"/>
<line x1="677.0" y1="543.1" x2="677.0" y2="636.0" stroke="#dcdcdc"/>
<line x1="747.1" y1="543.1" x2="747.1" y2="636.0" stroke="#dcdcdc"/>
<line x1="817.3" y1="543.1" x2="817.3" y2="636.0" stroke="#dcdcdc"/>
<line x1="887.5" y1="543.1" x2="887.5" y2="636.0" stroke="#dcdcdc"/>
<line x1="957.6" y1="543.1" x2="957.6" y2="636.0" stroke="#dcdcdc"/>
<line x1="1027.8" y1="543.1" x2="1027.8" y2="636.0" stroke="#dcdcdc"/>
<line x1="1097.9" y1="543.1" x2="1097.9" y2="636.0" stroke="#dcdcdc"/>
<line x1="1168.0" y1="543.1" x2="1168.0" y2="636.0" stroke="#dcdcdc"/>
<line x1="1238.2" y1="543.1" x2="1238.2" y2="636.0" stroke="#dcdcdc"/>
<line x1="1308.4" y1="543.1" x2="1308.4" y2="636.0" stroke="#dcdcdc"/>
<line x1="1378.5" y1="543.1" x2="1378.5" y2="636.0" stroke="#dcdcdc"/>
<line x1="1448.7" y1="543.1" x2="1448.7" y2="636.0" stroke="#dcdcdc"/>
<line x1="1518.8" y1="543.1" x2="1518.8" y2="636.0" stroke="#dcdcdc"/>
<line x1="1589.0" y1="543.1" x2="1589.0" y2="636.0" stroke="#dcdcdc"/>
<line x1="1659.1" y1="543.1" x2="1659.1" y2="636.0" stroke="#dcdcdc"/>
<line x1="1729.2" y1="543.1" x2="1729.2" y2="636.0" stroke="#dcdcdc"/>
<line x1="1799.4" y1="543.1" x2="1799.4" y2="636.0" stroke="#dcdcdc"/>
<line x1="115.8" y1="552.6" x2="1826.5" y2="552.6" stroke="#e8282b" stroke-width="1.2" stroke-dasharray="2,2"/>
<line x1="115.8" y1="561.6" x2="1826.5" y2="561.6" stroke="#f4cf4a" stroke-width="1.2" stroke-dasharray="2,2"/>
<line x1="116.0" y1="634.6" x2="350.0" y2="634.6" stroke="#d04040" stroke-width="1.6"/>
<line x1="453.0" y1="634.6" x2="747.5" y2="634.6" stroke="#d04040" stroke-width="1.6"/>
<line x1="791.0" y1="634.6" x2="1826.0" y2="634.6" stroke="#d04040" stroke-width="1.6"/>
<line x1="115.8" y1="636" x2="1826.5" y2="636" stroke="#222" stroke-width="1.3"/>
<path d="M109.8,543.1 H115.8 V636.0 H109.8" fill="none" stroke="#d9534f" stroke-width="1.3"/>
<line x1="109.8" y1="589.5" x2="115.8" y2="589.5" stroke="#d9534f" stroke-width="1.3"/>
<text x="103.8" y="548.3" text-anchor="end" font-size="9.6" letter-spacing="0.55" fill="#111">100</text>
<text x="103.8" y="594.8" text-anchor="end" font-size="9.6" letter-spacing="0.55" fill="#111">50</text>
<text x="103.8" y="641.2" text-anchor="end" font-size="9.6" letter-spacing="0.55" fill="#111">0</text>
<line x1="115.8" y1="636" x2="115.8" y2="641" stroke="#333"/>
<text transform="translate(119.8,647) rotate(-45)" text-anchor="end" font-size="9.9" textLength="116" lengthAdjust="spacingAndGlyphs" fill="#111">2021/08/17 15:47:04</text>
<line x1="185.9" y1="636" x2="185.9" y2="641" stroke="#333"/>
<text transform="translate(189.9,647) rotate(-45)" text-anchor="end" font-size="9.9" textLength="116" lengthAdjust="spacingAndGlyphs" fill="#111">2021/08/17 17:08:04</text>
<line x1="256.1" y1="636" x2="256.1" y2="641" stroke="#333"/>
<text transform="translate(260.1,647) rotate(-45)" text-anchor="end" font-size="9.9" textLength="116" lengthAdjust="spacingAndGlyphs" fill="#111">2021/08/17 18:29:04</text>
<line x1="326.2" y1="636" x2="326.2" y2="641" stroke="#333"/>
<text transform="translate(330.2,647) rotate(-45)" text-anchor="end" font-size="9.9" textLength="116" lengthAdjust="spacingAndGlyphs" fill="#111">2021/08/17 19:50:04</text>
<line x1="396.4" y1="636" x2="396.4" y2="641" stroke="#333"/>
<text transform="translate(400.4,647) rotate(-45)" text-anchor="end" font-size="9.9" textLength="116" lengthAdjust="spacingAndGlyphs" fill="#111">2021/08/17 21:11:04</text>
<line x1="466.6" y1="636" x2="466.6" y2="641" stroke="#333"/>
<text transform="translate(470.6,647) rotate(-45)" text-anchor="end" font-size="9.9" textLength="116" lengthAdjust="spacingAndGlyphs" fill="#111">2021/08/18 12:12:13</text>
<line x1="536.7" y1="636" x2="536.7" y2="641" stroke="#333"/>
<text transform="translate(540.7,647) rotate(-45)" text-anchor="end" font-size="9.9" textLength="116" lengthAdjust="spacingAndGlyphs" fill="#111">2021/08/18 13:33:13</text>
<line x1="606.9" y1="636" x2="606.9" y2="641" stroke="#333"/>
<text transform="translate(610.9,647) rotate(-45)" text-anchor="end" font-size="9.9" textLength="116" lengthAdjust="spacingAndGlyphs" fill="#111">2021/08/18 14:54:13</text>
<line x1="677.0" y1="636" x2="677.0" y2="641" stroke="#333"/>
<text transform="translate(681.0,647) rotate(-45)" text-anchor="end" font-size="9.9" textLength="116" lengthAdjust="spacingAndGlyphs" fill="#111">2021/08/18 16:15:13</text>
<line x1="747.1" y1="636" x2="747.1" y2="641" stroke="#333"/>
<text transform="translate(751.1,647) rotate(-45)" text-anchor="end" font-size="9.9" textLength="116" lengthAdjust="spacingAndGlyphs" fill="#111">2021/08/18 17:36:13</text>
<line x1="817.3" y1="636" x2="817.3" y2="641" stroke="#333"/>
<text transform="translate(821.3,647) rotate(-45)" text-anchor="end" font-size="9.9" textLength="116" lengthAdjust="spacingAndGlyphs" fill="#111">2021/09/06 14:18:16</text>
<line x1="887.5" y1="636" x2="887.5" y2="641" stroke="#333"/>
<text transform="translate(891.5,647) rotate(-45)" text-anchor="end" font-size="9.9" textLength="116" lengthAdjust="spacingAndGlyphs" fill="#111">2021/09/06 15:39:16</text>
<line x1="957.6" y1="636" x2="957.6" y2="641" stroke="#333"/>
<text transform="translate(961.6,647) rotate(-45)" text-anchor="end" font-size="9.9" textLength="116" lengthAdjust="spacingAndGlyphs" fill="#111">2021/09/06 17:00:16</text>
<line x1="1027.8" y1="636" x2="1027.8" y2="641" stroke="#333"/>
<text transform="translate(1031.8,647) rotate(-45)" text-anchor="end" font-size="9.9" textLength="116" lengthAdjust="spacingAndGlyphs" fill="#111">2021/09/07 13:31:27</text>
<line x1="1097.9" y1="636" x2="1097.9" y2="641" stroke="#333"/>
<text transform="translate(1101.9,647) rotate(-45)" text-anchor="end" font-size="9.9" textLength="116" lengthAdjust="spacingAndGlyphs" fill="#111">2021/09/07 14:52:27</text>
<line x1="1168.0" y1="636" x2="1168.0" y2="641" stroke="#333"/>
<text transform="translate(1172.0,647) rotate(-45)" text-anchor="end" font-size="9.9" textLength="116" lengthAdjust="spacingAndGlyphs" fill="#111">2021/09/07 16:13:27</text>
<line x1="1238.2" y1="636" x2="1238.2" y2="641" stroke="#333"/>
<text transform="translate(1242.2,647) rotate(-45)" text-anchor="end" font-size="9.9" textLength="116" lengthAdjust="spacingAndGlyphs" fill="#111">2021/09/07 17:34:27</text>
<line x1="1308.4" y1="636" x2="1308.4" y2="641" stroke="#333"/>
<text transform="translate(1312.4,647) rotate(-45)" text-anchor="end" font-size="9.9" textLength="116" lengthAdjust="spacingAndGlyphs" fill="#111">2021/09/08 10:05:33</text>
<line x1="1378.5" y1="636" x2="1378.5" y2="641" stroke="#333"/>
<text transform="translate(1382.5,647) rotate(-45)" text-anchor="end" font-size="9.9" textLength="116" lengthAdjust="spacingAndGlyphs" fill="#111">2021/09/08 11:26:33</text>
<line x1="1448.7" y1="636" x2="1448.7" y2="641" stroke="#333"/>
<text transform="translate(1452.7,647) rotate(-45)" text-anchor="end" font-size="9.9" textLength="116" lengthAdjust="spacingAndGlyphs" fill="#111">2021/09/08 12:37:33</text>
<line x1="1518.8" y1="636" x2="1518.8" y2="641" stroke="#333"/>
<text transform="translate(1522.8,647) rotate(-45)" text-anchor="end" font-size="9.9" textLength="116" lengthAdjust="spacingAndGlyphs" fill="#111">2021/09/08 13:05:54</text>
<line x1="1589.0" y1="636" x2="1589.0" y2="641" stroke="#333"/>
<text transform="translate(1593.0,647) rotate(-45)" text-anchor="end" font-size="9.9" textLength="116" lengthAdjust="spacingAndGlyphs" fill="#111">2021/09/08 13:32:54</text>
<line x1="1659.1" y1="636" x2="1659.1" y2="641" stroke="#333"/>
<text transform="translate(1663.1,647) rotate(-45)" text-anchor="end" font-size="9.9" textLength="116" lengthAdjust="spacingAndGlyphs" fill="#111">2021/09/08 13:59:54</text>
<line x1="1729.2" y1="636" x2="1729.2" y2="641" stroke="#333"/>
<text transform="translate(1733.2,647) rotate(-45)" text-anchor="end" font-size="9.9" textLength="116" lengthAdjust="spacingAndGlyphs" fill="#111">2021/09/08 14:26:54</text>
<line x1="1799.4" y1="636" x2="1799.4" y2="641" stroke="#333"/>
<text transform="translate(1803.4,647) rotate(-45)" text-anchor="end" font-size="9.9" textLength="116" lengthAdjust="spacingAndGlyphs" fill="#111">2021/09/08 14:53:54</text>
</g>
</svg>
<div class="lg-l" style="left:264px;top:349px;background:#6bb6db"></div>
<div class="lg-t" style="left:288.0px;top:343px;color:#111">F5_alliance/BIG-IP/BIG-IP_ASM_CPU<span class="j" style="width:34.14px">使用率</span>(sysGlobalHostCpuUsageRatio5s)/<span class="j" style="width:34.14px">取得値</span></div>
<div class="lg-l" style="left:264px;top:377px;width:18px;height:1px;background:repeating-linear-gradient(90deg,#a0a0a0 0 2px,transparent 2px 3.8px)"></div>
<div class="lg-t" style="left:288.0px;top:369px;color:#aaa">F5_alliance/BIG-IP/BIG-IP_ASM_CPU<span class="j" style="width:34.14px">使用率</span>(sysGlobalHostCpuUsageRatio5s)/<span class="j" style="width:56.91px">警告・上限</span></div>
<div class="lg-l" style="left:264px;top:403px;width:18px;height:1px;background:repeating-linear-gradient(90deg,#a0a0a0 0 2px,transparent 2px 3.8px)"></div>
<div class="lg-t" style="left:288.0px;top:395px;color:#aaa">F5_alliance/BIG-IP/BIG-IP_ASM_CPU<span class="j" style="width:34.14px">使用率</span>(sysTmmStatTmUsageRatio5s)/<span class="j" style="width:56.91px">注意・上限</span></div>
<div class="lg-l" style="left:264px;top:428px;background:#3d8f3d"></div>
<div class="lg-t" style="left:288.0px;top:422px;color:#111">F5_alliance/BIG-IP/BIG-IP_<span class="j" style="width:79.67px">コネクション数</span>(ltmNodeAddrStatServerCurConns)/<span class="j" style="width:34.14px">取得値</span></div>
<div class="lg-l" style="left:264px;top:453px;background:#c57a3c"></div>
<div class="lg-t" style="left:288.0px;top:447px;color:#111">F5_alliance/BIG-IP/<span class="j" style="width:68.28px">トラフィック</span>(64bits) (1.1)/<span class="j" style="width:34.14px">取得値</span>(in)</div>
<div class="lg-l" style="left:806px;top:351px;width:18px;height:1px;background:repeating-linear-gradient(90deg,#a0a0a0 0 2px,transparent 2px 3.8px)"></div>
<div class="lg-t" style="left:830.0px;top:343px;color:#aaa">F5_alliance/BIG-IP/BIG-IP_ASM_CPU<span class="j" style="width:34.14px">使用率</span>(sysGlobalHostCpuUsageRatio5s)/<span class="j" style="width:56.91px">注意・上限</span></div>
<div class="lg-l" style="left:806px;top:375px;background:#d23c3c"></div>
<div class="lg-t" style="left:830.0px;top:369px;color:#111">F5_alliance/BIG-IP/BIG-IP_ASM_CPU<span class="j" style="width:34.14px">使用率</span>(sysTmmStatTmUsageRatio5s)/<span class="j" style="width:34.14px">取得値</span></div>
<div class="lg-l" style="left:806px;top:403px;width:18px;height:1px;background:repeating-linear-gradient(90deg,#a0a0a0 0 2px,transparent 2px 3.8px)"></div>
<div class="lg-t" style="left:830.0px;top:395px;color:#aaa">F5_alliance/BIG-IP/BIG-IP_ASM_CPU<span class="j" style="width:34.14px">使用率</span>(sysTmmStatTmUsageRatio5s)/<span class="j" style="width:56.91px">警告・上限</span></div>
<div class="lg-l" style="left:806px;top:428px;background:#b5b53c"></div>
<div class="lg-t" style="left:830.0px;top:422px;color:#111">F5_alliance/BIG-IP/BIG-IP_<span class="j" style="width:68.28px">セッション数</span>/<span class="j" style="width:34.14px">取得値</span></div>
<div class="lg-l" style="left:806px;top:453px;background:#a03030"></div>
<div class="lg-t" style="left:830.0px;top:447px;color:#111">F5_alliance/BIG-IP/<span class="j" style="width:68.28px">トラフィック</span>(64bits) (1.1)/<span class="j" style="width:34.14px">取得値</span>(out)</div>
<div id="thead">
 <div class="th" style="left:0;width:106px"><span class="j" style="width:26.00px">項番</span></div>
 <div class="th" style="left:106px;width:433px"><span class="j" style="width:26.00px">日時</span></div>
 <div class="th" style="left:539px;width:437px"><span class="j" style="width:26.00px">発生</span></div>
 <div class="th" style="left:976px;width:778px"><span class="j" style="width:26.00px">復旧</span></div>
 <div class="abs" style="left:106px;top:0;width:1px;height:30px;background:#dfe6ea"></div>
 <div class="abs" style="left:539px;top:0;width:1px;height:30px;background:#dfe6ea"></div>
 <div class="abs" style="left:976px;top:0;width:1px;height:30px;background:#dfe6ea"></div>
 <svg class="abs" style="left:0;top:0" width="1754" height="30">
  <path d="M93.4,11.4 L96.9,5.6 L100.4,11.4 Z M93.4,12.8 L96.9,18.6 L100.4,12.8 Z M527.4,11.4 L530.9,5.6 L534.4,11.4 Z M527.4,12.8 L530.9,18.6 L534.4,12.8 Z M963.4,11.4 L966.9,5.6 L970.4,11.4 Z M963.4,12.8 L966.9,18.6 L970.4,12.8 Z M1742.4,11.4 L1745.9,5.6 L1749.4,11.4 Z M1742.4,12.8 L1745.9,18.6 L1749.4,12.8 Z" fill="#cfd6da"/>
 </svg>
</div>
<script>
(function(){
  var t=document.createElement('span');
  t.style.cssText='position:absolute;left:-2000px;top:0;font-size:100px;font-family:"Liberation Sans";white-space:nowrap';
  t.textContent='不明使用';
  document.body.appendChild(t);
  var w=t.getBoundingClientRect().width;
  document.body.removeChild(t);
  if (Math.abs(w-300)>3) return;
  var els=document.querySelectorAll('.j');
  for (var i=0;i<els.length;i++){
    var e=els[i], W=parseFloat(e.style.width);
    var inner=document.createElement('span');
    inner.style.display='inline-block';
    inner.style.transformOrigin='0 50%';
    while(e.firstChild) inner.appendChild(e.firstChild);
    e.appendChild(inner);
    var nw=inner.getBoundingClientRect().width;
    if (nw>0) inner.style.transform='scaleX('+(W/nw).toFixed(4)+')';
  }
})();
</script></body></html>
